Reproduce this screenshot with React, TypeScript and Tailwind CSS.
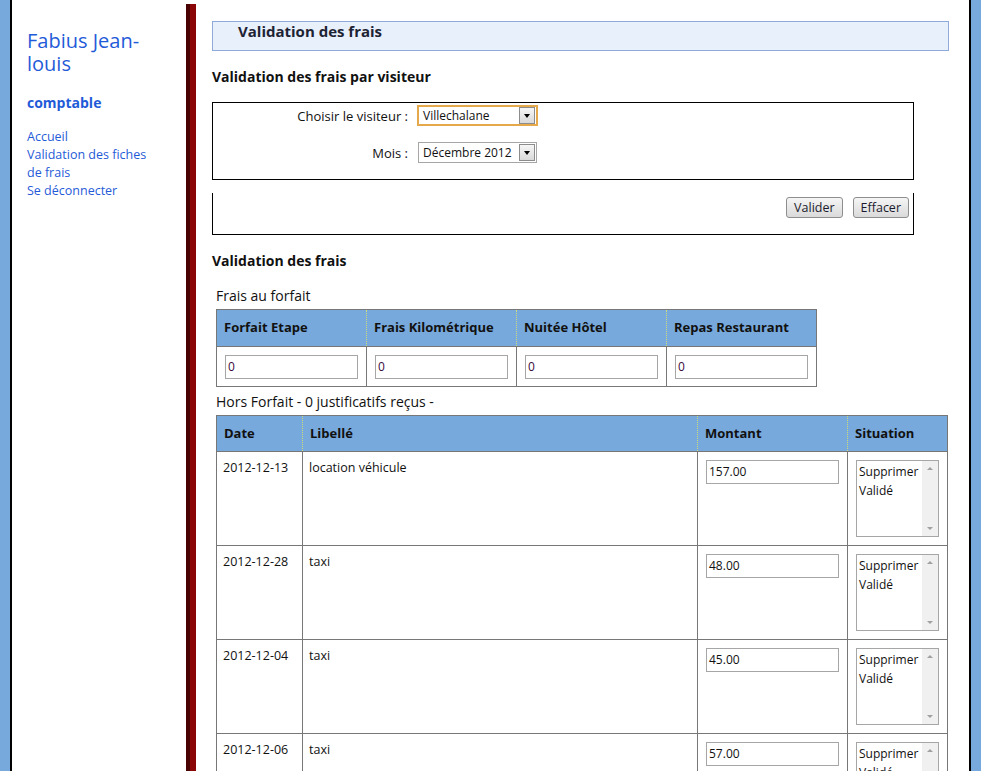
import React from "react";

const font = "font-['Open_Sans','Lato',sans-serif]";

type Row = { date: string; label: string; amount: string };

const rows: Row[] = [
  { date: "2012-12-13", label: "location véhicule", amount: "157.00" },
  { date: "2012-12-28", label: "taxi", amount: "48.00" },
  { date: "2012-12-04", label: "taxi", amount: "45.00" },
  { date: "2012-12-06", label: "taxi", amount: "57.00" },
];

function SelectBox({ value, width, focused }: { value: string; width: string; focused?: boolean }) {
  return (
    <div
      className={`flex h-[21px] items-center justify-between bg-white pl-[4px] pr-[1px] ${width} ${
        focused ? "border-2 border-[#e5a84b]" : "border border-[#a6a6a6]"
      }`}
    >
      <span className="text-[12px] leading-[16px] text-[#111]">{value}</span>
      <span className="flex h-[17px] w-[16px] items-center justify-center border border-[#8c8c8c] bg-gradient-to-b from-[#f6f6f6] to-[#d9d9d9]">
        <span className="h-0 w-0 border-x-[3.5px] border-t-[4px] border-x-transparent border-t-black" />
      </span>
    </div>
  );
}

function Listbox() {
  return (
    <div className="flex h-[77px] w-[83px] border border-[#a6a6a6] bg-white">
      <div className="flex-1 pl-[2px] pt-[1px] text-[12px] leading-[19px] text-[#111]">
        <div>Supprimer</div>
        <div>Validé</div>
      </div>
      <div className="flex w-[16px] flex-col items-center justify-between bg-[#f0f0f0] py-[6px]">
        <span className="h-0 w-0 border-x-[3px] border-b-[3px] border-x-transparent border-b-[#a0a0a0]" />
        <span className="h-0 w-0 border-x-[3px] border-t-[3px] border-x-transparent border-t-[#a0a0a0]" />
      </div>
    </div>
  );
}

function Button({ children }: { children: React.ReactNode }) {
  return (
    <button className="h-[21px] rounded-[3px] border border-[#8e8e8e] bg-gradient-to-b from-[#f5f5f5] to-[#dadada] px-[7px] text-[12.5px] leading-[16px] text-[#1b1b2e]">
      {children}
    </button>
  );
}

const thSep = "border-b border-l border-[#777] border-l-[#cfdc7c] [border-left-style:dotted]";

export default function App() {
  return (
    <div className={`min-h-[771px] bg-[#78a9dc] px-[10px] ${font}`}>
      <div className="flex min-h-[771px] border-x-2 border-black bg-white">
        {/* sidebar */}
        <aside className="w-[174px] shrink-0 pl-[15px] pt-[29px] text-[#1f5bd8]">
          <div className="text-[20px] leading-[23px]">
            Fabius Jean-
            <br />
            louis
          </div>
          <div className="mt-[19px] text-[14px] font-bold leading-[18px]">comptable</div>
          <nav className="mt-[16px] flex flex-col text-[12.5px] leading-[18px]">
            <a>Accueil</a>
            <a>Validation des fiches</a>
            <a>de frais</a>
            <a>Se déconnecter</a>
          </nav>
        </aside>

        <div className="mt-[4px] flex w-[10px] shrink-0">
          <div className="w-[4px] bg-[#4a0202]" />
          <div className="w-[6px] bg-[#8a0505]" />
        </div>

        {/* content */}
        <main className="flex-1 pl-[16px] pr-[20px] pt-[21px] text-[#111]">
          <div className="h-[30px] border border-[#8fa9d8] bg-[#e8f0fc] pl-[25px] text-[15px] font-bold leading-[18px] text-[#1d2333]">
            Validation des frais
          </div>

          <h2 className="mt-[17px] text-[14px] font-bold leading-[18px]">Validation des frais par visiteur</h2>

          <div className="mt-[16px] h-[78px] w-[702px] border border-black pt-[2px]">
            <div className="flex items-center">
              <span className="w-[195px] text-right text-[13px] leading-[18px]">Choisir le visiteur :</span>
              <div className="ml-[9px]">
                <SelectBox value="Villechalane" width="w-[121px]" focused />
              </div>
            </div>
            <div className="mt-[16px] flex items-center">
              <span className="w-[195px] text-right text-[13px] leading-[18px]">Mois :</span>
              <div className="ml-[10px]">
                <SelectBox value="Décembre 2012" width="w-[119px]" />
              </div>
            </div>
          </div>

          <div className="mt-[13px] flex h-[42px] w-[702px] justify-end gap-[10px] border-x border-b border-black pr-[4px] pt-[4px]">
            <Button>Valider</Button>
            <Button>Effacer</Button>
          </div>

          <h2 className="mt-[17px] text-[14px] font-bold leading-[18px]">Validation des frais</h2>

          <div className="ml-[4px] mt-[17px]">
            <div className="text-[14px] leading-[18px]">Frais au forfait</div>
            <table className="mt-[4px] border-collapse border border-[#777]">
              <thead>
                <tr className="h-[37px] bg-[#78a9dc] text-left text-[13px] font-bold">
                  {["Forfait Etape", "Frais Kilométrique", "Nuitée Hôtel", "Repas Restaurant"].map((h, i) => (
                    <th key={h} className={`w-[150px] px-[7px] ${i > 0 ? thSep : "border-b border-[#777]"}`}>
                      {h}
                    </th>
                  ))}
                </tr>
              </thead>
              <tbody>
                <tr className="h-[40px]">
                  {[0, 1, 2, 3].map((i) => (
                    <td key={i} className="border border-[#777] pl-[8px]">
                      <div className="flex h-[24px] w-[133px] items-center border border-[#a6a6a6] pl-[2px] text-[12px] text-[#3b0a3b]">
                        0
                      </div>
                    </td>
                  ))}
                </tr>
              </tbody>
            </table>

            <div className="mt-[6px] text-[14px] leading-[18px]">Hors Forfait - 0 justificatifs reçus -</div>
            <table className="mt-[4px] w-[732px] border-collapse border border-[#777]">
              <thead>
                <tr className="h-[36px] bg-[#78a9dc] text-left text-[13px] font-bold">
                  <th className="w-[86px] border-b border-[#777] px-[7px]">Date</th>
                  <th className={`w-[395px] px-[7px] ${thSep}`}>Libellé</th>
                  <th className={`w-[150px] px-[7px] ${thSep}`}>Montant</th>
                  <th className={`px-[7px] ${thSep}`}>Situation</th>
                </tr>
              </thead>
              <tbody>
                {rows.map((r) => (
                  <tr key={r.date} className="h-[94px] align-top text-[12.5px]">
                    <td className="border border-[#777] px-[6px] pt-[7px] leading-[17px]">{r.date}</td>
                    <td className="border border-[#777] px-[6px] pt-[7px] leading-[17px]">{r.label}</td>
                    <td className="border border-[#777] pl-[8px] pt-[8px]">
                      <div className="flex h-[24px] w-[133px] items-center border border-[#a6a6a6] pl-[2px] text-[12px]">
                        {r.amount}
                      </div>
                    </td>
                    <td className="border border-[#777] pl-[8px] pt-[8px]">
                      <Listbox />
                    </td>
                  </tr>
                ))}
              </tbody>
            </table>
          </div>
        </main>
      </div>
    </div>
  );
}
